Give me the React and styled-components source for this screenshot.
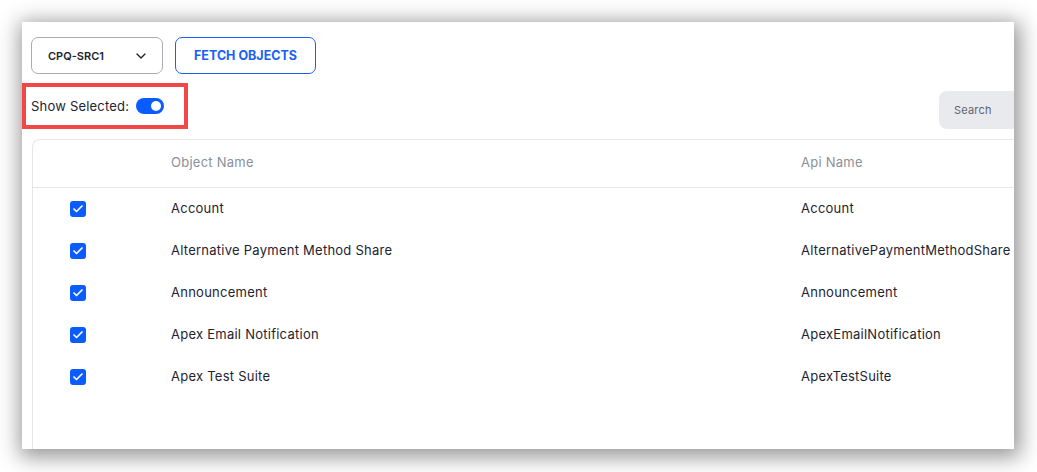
import React, { useState } from "react";
import styled, { createGlobalStyle } from "styled-components";
import { ChevronDown, Check } from "lucide-react";

const GlobalStyle = createGlobalStyle`
  body {
    margin: 0;
    background: #fff;
    font-family: Inter, "Noto Sans", sans-serif;
    color: #1e2330;
  }
`;

const Page = styled.div`
  padding: 22px;
  width: 1037px;
  height: 472px;
  box-sizing: border-box;
`;

const Panel = styled.div`
  width: 992px;
  height: 427px;
  background: #fff;
  overflow: hidden;
  box-shadow: 2px 4px 20px 4px rgba(0, 0, 0, 0.42);
  display: flex;
  flex-direction: column;
`;

const TopBar = styled.div`
  display: flex;
  gap: 12px;
  padding: 15px 0 0 9px;
`;

const Select = styled.div`
  width: 132px;
  height: 37px;
  box-sizing: border-box;
  border: 1px solid #a9acb2;
  border-radius: 7px;
  display: flex;
  align-items: center;
  justify-content: space-between;
  padding: 0 13px 0 16px;
  font-size: 11px;
  font-weight: 600;
  color: #1e2330;
`;

const FetchButton = styled.button`
  width: 141px;
  height: 37px;
  border: 1px solid #1a5ff5;
  border-radius: 7px;
  background: #fff;
  color: #1a5ff5;
  font-family: inherit;
  font-size: 12.5px;
  font-weight: 700;
`;

const FilterRow = styled.div`
  display: flex;
  justify-content: space-between;
  align-items: flex-end;
  margin-top: 9px;
`;

const Highlight = styled.div`
  width: 166px;
  height: 46px;
  box-sizing: border-box;
  border: 4px solid #f24747;
  display: flex;
  align-items: center;
  gap: 7px;
  padding-left: 5px;
  font-size: 13px;
  letter-spacing: 0.2px;
  color: #1e2330;
`;

const Toggle = styled.div`
  width: 28px;
  height: 16px;
  border-radius: 8px;
  background: ${(p) => (p.on ? "#0b5cff" : "#c6c9cf")};
  position: relative;
  &::after {
    content: "";
    position: absolute;
    top: 3px;
    left: ${(p) => (p.on ? "15px" : "3px")};
    width: 10px;
    height: 10px;
    border-radius: 50%;
    background: #fff;
  }
`;

const Search = styled.div`
  width: 110px;
  height: 38px;
  margin-right: -35px;
  border-radius: 8px;
  background: #e9eaed;
  display: flex;
  align-items: center;
  padding-left: 15px;
  box-sizing: border-box;
  font-size: 11px;
  letter-spacing: 0.2px;
  color: #5f6470;
`;

const Table = styled.div`
  margin: 10px 0 0 10px;
  width: 1010px;
  flex: 1;
  border: 1px solid #e4e6e9;
  border-bottom: none;
  border-top-left-radius: 8px;
`;

const Row = styled.div`
  display: grid;
  grid-template-columns: 138px 630px 1fr;
  align-items: center;
  height: ${(p) => (p.header ? "47px" : "42px")};
  border-bottom: ${(p) => (p.header ? "1px solid #e4e6e9" : "none")};
  font-size: 13px;
  letter-spacing: 0.25px;
  color: ${(p) => (p.header ? "#8b909a" : "#1e2330")};
  white-space: nowrap;
`;

const Cell = styled.div`
  margin-top: -3px;
`;

const Box = styled.div`
  width: 16px;
  height: 16px;
  border-radius: 3px;
  background: #0b5cff;
  display: flex;
  align-items: center;
  justify-content: center;
  margin-left: 37px;
  margin-top: 3px;
`;

const rows = [
  ["Account", "Account"],
  ["Alternative Payment Method Share", "AlternativePaymentMethodShare"],
  ["Announcement", "Announcement"],
  ["Apex Email Notification", "ApexEmailNotification"],
  ["Apex Test Suite", "ApexTestSuite"],
];

export default function App() {
  const [showSelected, setShowSelected] = useState(true);

  return (
    <Page>
      <GlobalStyle />
      <Panel>
        <TopBar>
          <Select>
            CPQ-SRC1
            <ChevronDown size={16} strokeWidth={2} color="#1e2330" />
          </Select>
          <FetchButton>FETCH OBJECTS</FetchButton>
        </TopBar>
        <FilterRow>
          <Highlight>
            Show Selected:
            <Toggle on={showSelected} onClick={() => setShowSelected(!showSelected)} />
          </Highlight>
          <Search>Search</Search>
        </FilterRow>
        <Table>
          <Row header>
            <Cell />
            <Cell>Object Name</Cell>
            <Cell>Api Name</Cell>
          </Row>
          {rows.map(([name, api]) => (
            <Row key={api}>
              <Cell>
                <Box>
                  <Check size={12} strokeWidth={3.5} color="#fff" />
                </Box>
              </Cell>
              <Cell>{name}</Cell>
              <Cell>{api}</Cell>
            </Row>
          ))}
        </Table>
      </Panel>
    </Page>
  );
}
